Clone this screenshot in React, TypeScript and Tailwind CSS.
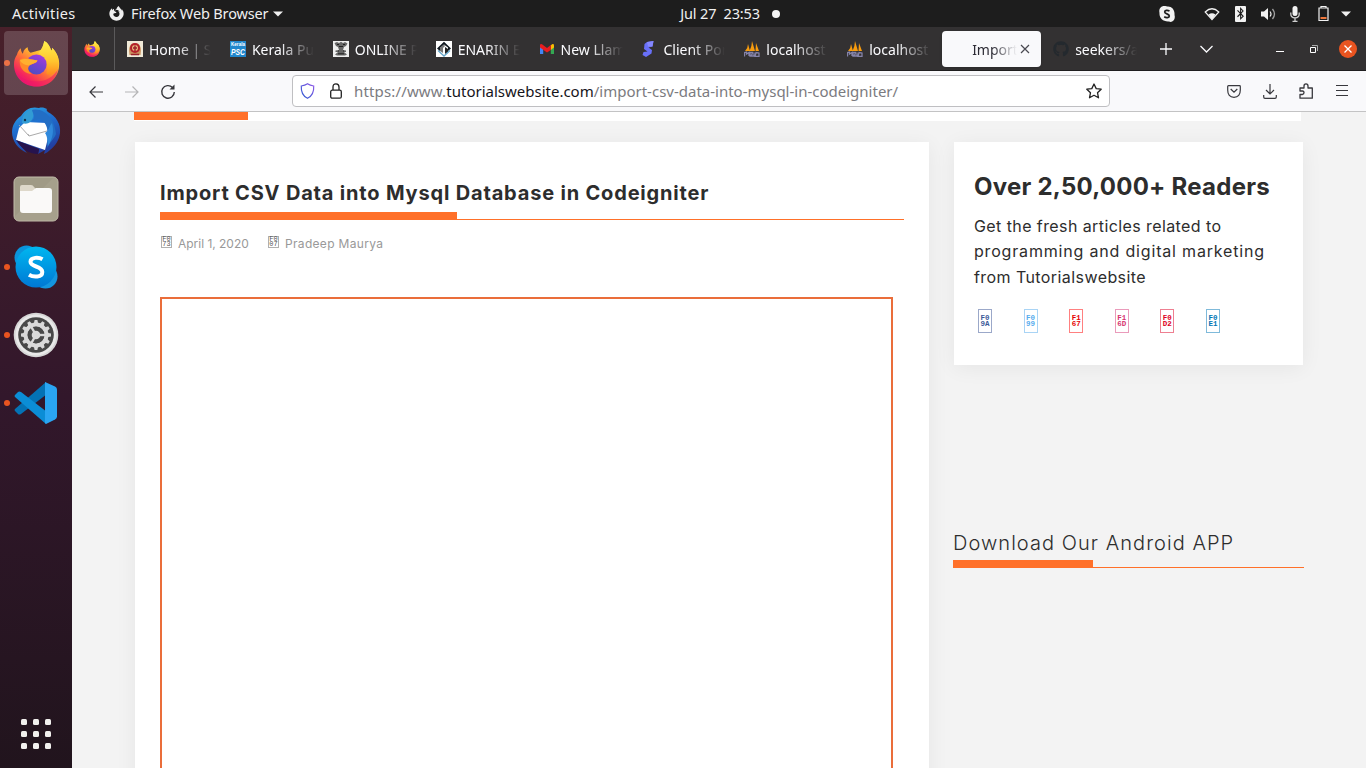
import React from "react";
import { FaGithub, FaBluetoothB, FaFirefoxBrowser } from "react-icons/fa";

const UI = "font-['Noto_Sans','Open_Sans',sans-serif]";
const BODY = "font-['Inter','Noto_Sans',sans-serif]";

function FirefoxIcon({ size }: { size: number }) {
  const id = "ff" + size;
  return (
    <svg width={size} height={size} viewBox="0 0 48 48">
      <defs>
        <linearGradient id={id + "a"} x1="0.85" y1="0.05" x2="0.2" y2="0.95">
          <stop offset="0" stopColor="#fff44f" />
          <stop offset="0.35" stopColor="#ffbd2f" />
          <stop offset="0.6" stopColor="#ff6a3a" />
          <stop offset="0.85" stopColor="#f5245e" />
          <stop offset="1" stopColor="#e0117c" />
        </linearGradient>
        <linearGradient id={id + "b"} x1="0.8" y1="0" x2="0.3" y2="1">
          <stop offset="0" stopColor="#a93bdd" />
          <stop offset="0.5" stopColor="#7542d2" />
          <stop offset="1" stopColor="#4b4fc0" />
        </linearGradient>
        <linearGradient id={id + "c"} x1="0" y1="0" x2="0" y2="1">
          <stop offset="0" stopColor="#fff04d" />
          <stop offset="0.6" stopColor="#ffc52e" />
          <stop offset="1" stopColor="#ff8a1e" />
        </linearGradient>
      </defs>
      <path d="M4 15C5 12 6 10 8 8.500C8 11 9 13 10 14C11 10 13 8 15 7.500C15 10 16 12 18 13L29 10C31 7 31 4 32 1C36 3 38 7 39 11C40 10 40 9 40 8C45 13 48 20 47 27C46 39 36 47.500 24 47.500C11 47.500 1 38 1 25C1 21 2 18 4 15Z" fill={`url(#${id}a)`} />
      <path d="M32 1C36 3 38 7 39 11C40 10 40 9 40 8C45 13 48 21 46 28C43 36 37 37 34 34C37 29 35 21 26 13C29 10 31 6 32 1Z" fill={`url(#${id}c)`} />
      <circle cx="24" cy="25" r="10.300" fill={`url(#${id}b)`} />
      <path d="M7 20C12 17 18 20 25 21C24 24 20 24 17 26C14 29 16 32 19 35C10 34 6 27 7 20Z" fill="#ff8a28" />
      <path d="M7 21C12 18 18 20 25 21C24 24 20 24 16 26C12 26 9 24 7 21Z" fill="#ffb02f" />
      <path d="M2 30C7 41 18 43 27 42C37 41 43 35 46 29C45 40 36 47.500 24 47.500C13 47.500 5 40 2 30Z" fill="#ed1768" opacity=".55" />
    </svg>
  );
}

function Thunderbird() {
  return (
    <svg width="50" height="50" viewBox="0 0 50 50">
      <defs>
        <linearGradient id="tb" x1="0" y1="0" x2="0.4" y2="1">
          <stop offset="0" stopColor="#2eb0e8" />
          <stop offset="0.45" stopColor="#1f6fd0" />
          <stop offset="1" stopColor="#223fa2" />
        </linearGradient>
      </defs>
      <path d="M10 10C14 3 21 0 28 2C31 1 34 2 36 3C35 4 36 5 37 6C45 10 50 18 49 27C48 35 44 40 39 44C37 46 35 47 33 48L34 44L27 48L28 43L7 36C10 41 14 44 16 47C7 43 1 35 1 26C1 20 4 14 10 10Z" fill="url(#tb)" />
      <path d="M8 22L14 16L36 17L37 32L34 44L5 34Z" fill="#fff" />
      <path d="M8 19L18 30L36 25M18 30L17 28" fill="none" stroke="#aaa" strokeWidth="1" />
      <path d="M11 17C11 10 15 3 24 3C20 8 25 10 19 16C17 18 14 18 11 17Z" fill="#319bd4" />
      <path d="M21 4C33 1 44 13 45 28C43 33 39 36 36 42C37 33 39 24 33 16C29 11 25 15 21 15C25 11 22 8 21 4Z" fill="#226ec5" />
      <path d="M34 27C38 25 38 20 41 17C43 25 42 32 37 40C36 36 37 31 34 27Z" fill="#3089dc" />
      <path d="M5 34L28 43L27 48C18 48 11 43 5 34Z" fill="#26134e" />
      <circle cx="14" cy="14" r="1.200" fill="#12344b" />
    </svg>
  );
}

function Files() {
  return (
    <svg width="46" height="46" viewBox="0 0 46 46">
      <rect x="1" y="1" width="44" height="44" rx="5" fill="#a09a86" stroke="#c2bcaa" strokeWidth="1" />
      <path d="M2 40L40 2H44V44H2Z" fill="#aaa591" opacity=".6" />
      <path d="M7 11Q7 9 9 9H18Q20 9 21 11L23 13H36V22H7Z" fill="#ded8ca" />
      <path d="M7 15H19L23 12H36Q39 12 39 15V34Q39 37 36 37H10Q7 37 7 34Z" fill="#faf9f8" />
    </svg>
  );
}

function Skype() {
  return (
    <svg width="44" height="44" viewBox="0 0 44 44">
      <defs>
        <linearGradient id="sk" x1="0" y1="0" x2="0" y2="1">
          <stop offset="0" stopColor="#00b7f0" />
          <stop offset="1" stopColor="#0078d4" />
        </linearGradient>
      </defs>
      <circle cx="12.500" cy="12.500" r="12" fill="#0a94dc" />
      <circle cx="31.500" cy="31.500" r="12" fill="#1496df" />
      <circle cx="22" cy="22" r="20.500" fill="url(#sk)" />
      <path d="M28.500 14.200C25 12.200 16.500 11.800 16.500 16.800C16.500 22.500 28.300 20.500 28.300 27C28.300 32.500 19.500 32.500 15 29.800" fill="none" stroke="#fff" strokeWidth="4" />
    </svg>
  );
}

function Settings() {
  const teeth = Array.from({ length: 12 }, (_, i) => i * 30);
  return (
    <svg width="46" height="46" viewBox="0 0 46 46">
      <circle cx="23" cy="23" r="22.300" fill="#d6d6d6" />
      <circle cx="23" cy="23" r="20.500" fill="#e9e9e9" />
      <circle cx="23" cy="23" r="17.800" fill="#484848" />
      {teeth.map((a) => (
        <path key={a} d="M20.800 12L21.600 8H24.400L25.200 12Z" fill="#d9d9d9" transform={`rotate(${a} 23 23)`} />
      ))}
      <circle cx="23" cy="23" r="10.500" fill="none" stroke="#d9d9d9" strokeWidth="4" />
      <circle cx="23" cy="23" r="6.500" fill="none" stroke="#484848" strokeWidth="3.500" />
      <circle cx="23" cy="23" r="4.300" fill="#d9d9d9" />
      {[60, 180, 300].map((a) => (
        <path key={a} d="M23 23V13" stroke="#d9d9d9" strokeWidth="2.400" transform={`rotate(${a + 30} 23 23)`} />
      ))}
    </svg>
  );
}

function VSCode() {
  return (
    <svg width="44" height="44" viewBox="0 0 44 44">
      <path d="M32 1L33 13L7 33Q5 34 4 33L1 30Q0 29 1 28Z" fill="#0472b5" />
      <path d="M32 43L33 31L7 11Q5 10 4 11L1 14Q0 15 1 16Z" fill="#0b8dd6" />
      <path d="M31 1L41 5.500Q43 6.500 43 8.500V35.500Q43 37.500 41 38.500L32 43L31 42Z" fill="#2aa5f2" />
    </svg>
  );
}

const DOCK = [
  { icon: <FirefoxIcon size={47} />, active: true, dot: true },
  { icon: <Thunderbird />, active: false, dot: false },
  { icon: <Files />, active: false, dot: false },
  { icon: <Skype />, active: false, dot: true },
  { icon: <Settings />, active: false, dot: true },
  { icon: <VSCode />, active: false, dot: true },
];

function Dock() {
  return (
    <aside className="flex w-[72px] shrink-0 flex-col items-center bg-gradient-to-b from-[#48202a] via-[#32172b] to-[#21141d] pt-1">
      {DOCK.map((d, i) => (
        <div key={i} className="mb-1 flex w-[72px] items-center">
          <span className={d.dot ? "ml-1 h-1.5 w-1.5 rounded-full bg-[#e95420]" : "ml-1 h-1.5 w-1.5"} />
          <span className={d.active ? "-ml-1.5 flex h-16 w-16 items-center justify-center rounded bg-[#ffffff2c]" : "-ml-1.5 flex h-16 w-16 items-center justify-center"}>
            {d.icon}
          </span>
        </div>
      ))}
      <div className="mt-auto mb-[19px] grid grid-cols-3 gap-1.5">
        {Array.from({ length: 9 }, (_, i) => <span key={i} className="h-1.5 w-1.5 rounded-[1.5px] bg-[#f2f0ee]" />)}
      </div>
    </aside>
  );
}

function TopBar() {
  return (
    <header className={`grid h-[27px] shrink-0 grid-cols-[1fr_auto_1fr] items-center bg-[#1d1d1d] text-[14.500px] text-[#f0f0f0] ${UI}`}>
      <div className="flex items-center pl-3">
        <span className="w-[97px] tracking-[0.3px]">Activities</span>
        <FaFirefoxBrowser size={15} />
        <span className="ml-[7px] whitespace-nowrap tracking-[-0.15px]">Firefox Web Browser</span>
        <svg className="ml-[5px]" width="10" height="6" viewBox="0 0 10 6"><path d="M0 0.500H10L5 5.500Z" fill="#f0f0f0" /></svg>
      </div>
      <div className="flex items-center pl-[94px]">
        <span className="whitespace-pre tracking-[-0.15px]">Jul 27  23:53</span>
        <span className="ml-3 h-2 w-2 rounded-full bg-[#f4f4f4]" />
      </div>
      <div className="flex items-center justify-end pr-[15px]">
        <svg width="16" height="16" viewBox="0 0 16 16">
          <path d="M5 0C7 0 8 .5 9 .5C13 .5 16 4 15.500 9C17 14 13 17 10 15.500C4 16 0 12 .5 7C-.5 3 2 0 5 0Z" fill="#f2f2f2" />
          <path d="M10.500 5C8.500 4 5.700 4.200 5.700 6C5.700 8.200 10.300 7.500 10.300 9.900C10.300 12 7 12 5.200 10.800" fill="none" stroke="#1d1d1d" strokeWidth="1.700" />
        </svg>
        <svg className="ml-[29px]" width="16" height="14" viewBox="0 0 16 14">
          <path d="M1.200 5Q8 -1.500 14.800 5L8 12.500Z" fill="none" stroke="#f2f2f2" strokeWidth="1.200" />
          <path d="M4.500 7.500Q8 5 11.500 7.500L8 12.500Z" fill="#f2f2f2" />
        </svg>
        <span className="ml-[15px] flex h-4 w-[11px] items-center justify-center rounded-[1px] bg-[#f2f2f2] text-[#1d1d1d]"><FaBluetoothB size={13} /></span>
        <svg className="ml-[15px]" width="15" height="14" viewBox="0 0 15 14">
          <path d="M0 4.500H3L7 1V13L3 9.500H0Z" fill="#f2f2f2" />
          <path d="M9 4.500Q11 7 9 9.500" fill="none" stroke="#f2f2f2" strokeWidth="1.200" />
          <path d="M11.500 2Q15.500 7 11.500 12" fill="none" stroke="#a0a0a0" strokeWidth="1.300" />
        </svg>
        <svg className="ml-[14px]" width="10" height="16" viewBox="0 0 10 16">
          <rect x="2.500" y="0" width="5" height="10" rx="2.500" fill="#f2f2f2" />
          <path d="M.8 6.500V8Q.8 11.800 5 11.800T9.200 8V6.500M5 12V15M2.500 15.300H7.500" fill="none" stroke="#d0d0d0" strokeWidth="1.300" />
        </svg>
        <svg className="ml-[18px]" width="11" height="15" viewBox="0 0 11 15">
          <path d="M3 1.500V.5H8V1.500M1 2H10V14.500H1Z" fill="none" stroke="#f2f2f2" strokeWidth="1.200" />
          <rect x="2.500" y="11" width="6" height="2" fill="#f0763a" />
        </svg>
        <svg className="ml-3" width="10" height="6" viewBox="0 0 10 6"><path d="M0 .5H10L5 5.500Z" fill="#f0f0f0" /></svg>
      </div>
    </header>
  );
}

const KeralaSeal = (
  <svg width="16" height="16" viewBox="0 0 16 16">
    <rect width="16" height="16" fill="#f0ead8" />
    <path d="M2.500 14Q1 5 5 2.500H11Q15 5 13.500 14Z" fill="#c9925f" />
    <circle cx="8" cy="7" r="5" fill="#b3202a" />
    <circle cx="8" cy="7" r="3" fill="#e9b77c" />
    <path d="M8 4.500V10M6 7H10M4 13.500H12" stroke="#98202a" strokeWidth="1.400" />
  </svg>
);
const Psc = (
  <svg width="16" height="16" viewBox="0 0 16 16">
    <rect width="16" height="16" fill="#2187cc" />
    <text x="1" y="5" fontSize="4.500" fontWeight="bold" fill="#fff" fontFamily="Liberation Sans" textLength="14">Kerala</text>
    <text x="1" y="14" fontSize="9" fontWeight="bold" fontStyle="italic" fill="#fff" fontFamily="Liberation Sans" textLength="14" lengthAdjust="spacingAndGlyphs">PSC</text>
  </svg>
);
const Emblem = (
  <svg width="16" height="16" viewBox="0 0 16 16">
    <rect width="16" height="16" fill="#eee" />
    <path d="M1.500 2L4 1L6 2L8 .8L10 2L12 1L14.500 2.500L13 5L11 6L10 9L13 9.500V11H11L14 13.500L12 14.500H4L2 13.500L5 11H2.500V9.500L6 9L5 6L3 5Z" fill="#666" />
    <path d="M4 3.500H6M10 3.500H12M6 5.500H10M5 10H6M10 10H11M5 12.800H11" stroke="#222" strokeWidth="1" />
  </svg>
);
const Enarin = (
  <svg width="16" height="16" viewBox="0 0 16 16">
    <rect width="16" height="16" fill="#fff" />
    <path d="M8 .8L15 7.500L12 10V6.500L8 3.500L4 7V10L1 7.500Z" fill="#101820" />
    <path d="M4 7L8 3.500L9 5L7 7V12L4 10Z" fill="#777" />
    <path d="M9 6L12 8V11L9 13Z" fill="#222" />
    <path d="M2 9.500L8 15L14 9.500" fill="none" stroke="#65a5c9" strokeWidth="1.300" />
  </svg>
);
const Gmail = (
  <svg width="16" height="16" viewBox="0 0 16 16">
    <path d="M1 4V13H4.200V6Z" fill="#4285f4" />
    <path d="M15 4V13H11.800V6Z" fill="#34a853" />
    <path d="M11.800 4.500L13 3.200Q15 2.500 15 4.500V6.500L11.800 9Z" fill="#fbbc04" />
    <path d="M1 4.500Q1 2.500 3 3.200L8 7L11.800 4V9L8 11.500L1 6.500Z" fill="#ea1c1f" />
  </svg>
);
const Client = (
  <svg width="16" height="16" viewBox="0 0 16 16">
    <path d="M3.500 3L6 1L12.500 0L11.500 5.500L7.500 6.500L11 9L10.500 12.500L5 16L1.500 14L2.500 11L6.500 10.500L3 8Z" fill="#6970f8" />
    <path d="M6 1L12.500 0L11.500 5.500L7 5.500Z" fill="#8587ff" />
  </svg>
);
const Sail = (
  <svg width="16" height="16" viewBox="0 0 16 16">
    <path d="M1 10Q4 7 4 3L6 10ZM5.500 10Q8 5 8 0L11 10ZM11.500 10L12 2L15 10Z" fill="#f89c0e" />
    <path d="M.5 15.500V11.500L2.500 11V13L5 11.500V15M6 15V11.500H8.500L8 13.500L6.500 15H10V11.500M11 15.500L12 11.500L15 12V15.500Z" fill="none" stroke="#8583a9" strokeWidth="1.300" />
  </svg>
);

const TABS = [
  { icon: KeralaSeal, label: "Home | SPARK" },
  { icon: Psc, label: "Kerala Public" },
  { icon: Emblem, label: "ONLINE PORTAL" },
  { icon: Enarin, label: "ENARIN Event" },
  { icon: Gmail, label: "New Llama" },
  { icon: Client, label: "Client Portal" },
  { icon: Sail, label: "localhost / x" },
  { icon: Sail, label: "localhost / x" },
];

const FADE = "pt-px overflow-hidden whitespace-nowrap [mask-image:linear-gradient(to_right,black_45%,transparent)]";

function TabStrip() {
  return (
    <div className={`flex h-11 shrink-0 items-center border-b border-[#1f1e1f] bg-[#333132] text-[14px] text-[#fbfbfe] ${UI}`}>
      <div className="flex h-full w-[43px] items-center border-r border-[#5b5a5b] pl-3"><FirefoxIcon size={16} /></div>
      <div className="flex pl-3">
        {TABS.map((t, i) => (
          <div key={i} className="flex w-[102.9px] items-center gap-1.5">
            {t.icon}
            <span className={`w-[62px] ${FADE}`}>{t.label}</span>
          </div>
        ))}
      </div>
      <div className="-ml-2 flex h-9 w-[99px] shrink-0 items-center rounded bg-[#f9f9fb] pl-[30px] text-[#2b2a33] shadow">
        <span className={`w-[45px] ${FADE}`}>Import csv</span>
        <svg className="ml-[3px]" width="10" height="10" viewBox="0 0 10 10"><path d="M1 1L9 9M9 1L1 9" stroke="#4a4a50" strokeWidth="1.200" /></svg>
      </div>
      <FaGithub size={16} color="#24292e" className="ml-3 shrink-0" />
      <span className={`ml-1.5 w-[62px] shrink-0 ${FADE}`}>seekers/app</span>
      <svg className="ml-[23px] shrink-0" width="12" height="12" viewBox="0 0 12 12"><path d="M6 0V12M0 6H12" stroke="#fbfbfe" strokeWidth="1.300" /></svg>
      <svg className="ml-7 shrink-0" width="13" height="8" viewBox="0 0 13 8"><path d="M.5 1L6.500 7L12.500 1" fill="none" stroke="#fbfbfe" strokeWidth="1.300" /></svg>
      <span className="mt-[5px] ml-[63px] h-px w-2 shrink-0 bg-white" />
      <svg className="ml-[26px] shrink-0" width="8" height="8" viewBox="0 0 8 8">
        <path d="M.5 2.500H5.500V7.500H.5Z" fill="none" stroke="#fff" />
        <path d="M2 .5H7.500V6" fill="none" stroke="#aaa" />
      </svg>
      <span className="ml-[21px] flex h-[18px] w-[18px] shrink-0 items-center justify-center rounded-full bg-[#e95420]">
        <svg width="8" height="8" viewBox="0 0 8 8"><path d="M.5.5L7.500 7.500M7.500.5L.5 7.500" stroke="#fff" strokeWidth="1.300" /></svg>
      </span>
    </div>
  );
}

function Toolbar() {
  return (
    <div className="flex h-[41px] shrink-0 items-center border-b border-[#c3c3c4] bg-[#f9f9fb]">
      <svg className="mt-px ml-[17px]" width="14" height="12" viewBox="0 0 14 12"><path d="M14 6H1M6.500 .5L1 6L6.500 11.500" fill="none" stroke="#38383d" strokeWidth="1.200" /></svg>
      <svg className="mt-px ml-[22px]" width="14" height="12" viewBox="0 0 14 12"><path d="M0 6H13M7.500 .5L13 6L7.500 11.500" fill="none" stroke="#b5b5b7" strokeWidth="1.200" /></svg>
      <svg className="mt-px ml-[21px]" width="16" height="16" viewBox="0 0 16 16">
        <path d="M12.500 3.500A6.300 6.300 0 1 0 14.300 8" fill="none" stroke="#38383d" strokeWidth="1.400" />
        <path d="M9.500 5.500H14.500V.5Z" fill="#38383d" />
      </svg>
      <div className={`ml-[116px] flex h-8 w-[818px] items-center rounded border border-[#bfbfc2] bg-white text-[15px] ${UI}`}>
        <svg className="ml-[7px]" width="15" height="16" viewBox="0 0 15 16">
          <defs><linearGradient id="shield" x1="1" y1="0" x2="0" y2="1"><stop offset="0" stopColor="#9059e8" /><stop offset="1" stopColor="#2b5bd0" /></linearGradient></defs>
          <path d="M7.500 .8Q10 2.500 13.700 3Q14.300 12 7.500 15.300Q.7 12 1.300 3Q5 2.500 7.500 .8Z" fill="none" stroke="url(#shield)" strokeWidth="1.200" />
        </svg>
        <svg className="ml-[15px]" width="12" height="16" viewBox="0 0 12 16"><rect x=".7" y="7.200" width="10.600" height="8" rx="1.500" fill="none" stroke="#222" strokeWidth="1.300" /><path d="M3 7V4Q3 .8 6 .8T9 4V7" fill="none" stroke="#222" strokeWidth="1.300" /></svg>
        <span className="ml-3 w-[732px] whitespace-nowrap text-[#7b7b80]"><span className="tracking-[0.15px]">https://www.</span><span className="text-[#15141a]">tutorialswebsite.com</span>/import-csv-data-into-mysql-in-codeigniter/</span>
        <svg className="mr-[7px] shrink-0" width="16" height="16" viewBox="0 0 16 16"><path d="M8 1L10.200 5.600L15.200 6.200L11.500 9.700L12.500 14.800L8 12.300L3.500 14.800L4.500 9.700L.8 6.200L5.800 5.600Z" fill="none" stroke="#222" strokeWidth="1.300" strokeLinejoin="round" /></svg>
      </div>
      <svg className="ml-[117px]" width="14" height="13" viewBox="0 0 14 13"><path d="M1.500 .7H12.500Q13.300 .7 13.300 1.500V5Q13.300 12.300 7 12.300T.7 5V1.500Q.7 .7 1.500 .7ZM3.700 4L7 7.200L10.300 4" fill="none" stroke="#38383d" strokeWidth="1.200" /></svg>
      <svg className="ml-[22px]" width="14" height="15" viewBox="0 0 14 15"><path d="M7 0V10M3 6L7 10L11 6M.7 11V13Q.7 14.300 2 14.300H12Q13.300 14.300 13.300 13V11" fill="none" stroke="#38383d" strokeWidth="1.200" /></svg>
      <svg className="ml-[22px]" width="14" height="16" viewBox="0 0 14 16"><path d="M1 5H5V3Q5 .8 7 .8T9 3V5H13.300V15.200H1V11.500H3.500Q5 11 5 9.500T3.500 8H1Z" fill="none" stroke="#38383d" strokeWidth="1.300" strokeLinejoin="round" /></svg>
      <svg className="-mt-px ml-[23px]" width="12" height="11" viewBox="0 0 12 11"><path d="M0 .5H12M0 5.500H12M0 10.500H12" stroke="#38383d" strokeWidth="1" /></svg>
    </div>
  );
}

function SmallBox({ a, b }: { a: string; b: string }) {
  return (
    <span className="flex h-3 w-[11px] shrink-0 flex-col items-center justify-center border border-[#b0b0b0] font-['Liberation_Mono',monospace] text-[7px] leading-[5.500px] text-[#555]">
      <span>{a}</span><span>{b}</span>
    </span>
  );
}

const SOCIAL = [
  { a: "F0", b: "9A", c: "border-[#9ba8c9] text-[#3b5998]" },
  { a: "F0", b: "99", c: "border-[#a9d4f5] text-[#55acee]" },
  { a: "F1", b: "67", c: "border-[#ff8080] text-[#e60000]" },
  { a: "F1", b: "6D", c: "border-[#ea9bbb] text-[#d6336f]" },
  { a: "F0", b: "D2", c: "border-[#ee7f91] text-[#dd0022]" },
  { a: "F0", b: "E1", c: "border-[#7fbada] text-[#0075b5]" },
];

const CARD = "bg-white shadow-[0_3px_20px_rgba(0,0,0,0.06)]";

function Page() {
  return (
    <main className={`flex min-h-0 flex-1 flex-col overflow-hidden bg-[#f3f3f3] pl-[62px] text-[#2d2d2d] ${BODY}`}>
      <div className="h-[9px] w-[1167px] shrink-0 bg-white"><div className="h-2 w-[114px] bg-[#ff7029]" /></div>
      <div className="flex pt-[21px]">
        <article className={`ml-px h-[700px] w-[794px] shrink-0 pt-9 pl-[25px] ${CARD}`}>
          <h1 className="h-[34px] text-[20px] leading-[30px] font-bold tracking-[0.82px] whitespace-nowrap">Import CSV Data into Mysql Database in Codeigniter</h1>
          <div className="flex h-2 w-[744px] items-end border-b border-[#ff7029]"><div className="-mb-px h-2 w-[297px] bg-[#ff7029]" /></div>
          <div className="mt-4 flex h-4 items-center text-[12px] text-[#999]">
            <span className="ml-px -mt-1"><SmallBox a="F0" b="73" /></span>
            <span className="ml-1.5 w-[90px] tracking-[-0.02px]">April 1, 2020</span>
            <span className="-mt-1"><SmallBox a="F0" b="07" /></span>
            <span className="ml-1.5 tracking-[0.32px]">Pradeep Maurya</span>
          </div>
          <div className="mt-[45px] h-[600px] w-[733px] border-2 border-[#ea6d3a]" />
        </article>
        <aside className="ml-6 w-[351px] shrink-0">
          <section className={`ml-px h-[223px] w-[349px] pt-7 pl-5 ${CARD}`}>
            <h2 className="text-[24px] leading-[34px] font-bold tracking-[0.25px] whitespace-nowrap">Over 2,50,000+ Readers</h2>
            <p className="mt-[9.500px] text-[16px] leading-[25.600px] whitespace-nowrap">
              <span className="tracking-[0.41px]">Get the fresh articles related to</span><br />
              <span className="tracking-[0.82px]">programming and digital marketing</span><br />
              <span className="tracking-[0.42px]">from Tutorialswebsite</span>
            </p>
            <div className="mt-[18.500px] ml-1 flex gap-[31.600px]">
              {SOCIAL.map((s) => (
                <span key={s.a + s.b} className={`flex h-6 w-3.5 flex-col items-center justify-center border pt-px font-['Liberation_Mono',monospace] text-[7.500px] leading-[6px] font-bold ${s.c}`}>
                  <span>{s.a}</span><span>{s.b}</span>
                </span>
              ))}
            </div>
          </section>
          <h3 className="mt-[163px] h-8 text-[20px] leading-[31px] font-light tracking-[1.05px] whitespace-nowrap">Download Our Android APP</h3>
          <div className="flex h-2 items-end border-b border-[#ff7029]"><div className="-mb-px h-2 w-[140px] bg-[#ff7029]" /></div>
        </aside>
      </div>
    </main>
  );
}

export default function App() {
  return (
    <div className="flex h-screen w-[1366px] flex-col overflow-hidden">
      <TopBar />
      <div className="flex min-h-0 flex-1">
        <Dock />
        <div className="flex min-w-0 flex-1 flex-col">
          <TabStrip />
          <Toolbar />
          <Page />
        </div>
      </div>
    </div>
  );
}
